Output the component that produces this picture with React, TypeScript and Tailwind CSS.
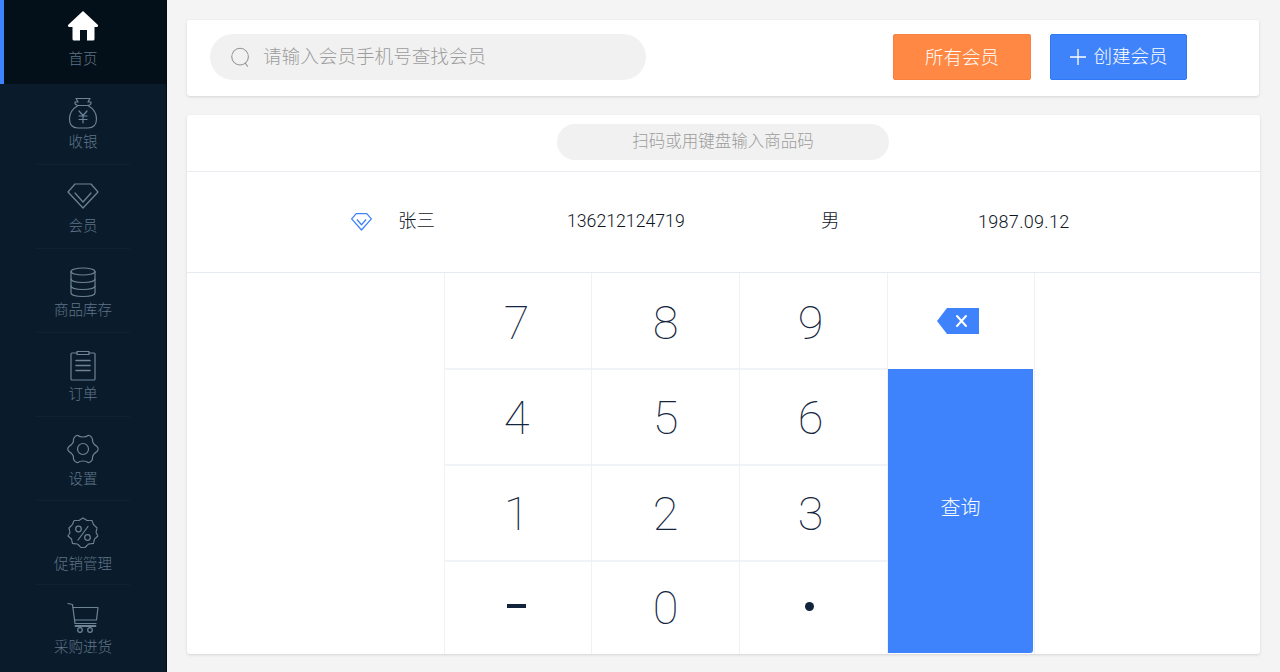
import type { ReactNode } from 'react';

const cjk = '[font-family:Roboto,"Noto_Sans_CJK_SC",sans-serif]';

function NavIcon({ children }: { children: ReactNode }) {
  return (
    <svg viewBox="0 0 32 32" className="w-8 h-8" fill="none" stroke="#6d8497" strokeWidth="1.2" strokeLinejoin="round" strokeLinecap="round">
      {children}
    </svg>
  );
}

function HomeIcon() {
  return (
    <svg viewBox="0 0 32 32" className="w-8 h-8">
      <path fill="#fff" d="M16 1 L31 15 Q31.5 17 29 17 L27.5 17 L27.5 29 Q27.5 30.5 26 30.5 L20 30.5 L20 20 L13 20 L13 30.5 L7 30.5 Q5.5 30.5 5.5 29 L5.5 17 L3 17 Q.5 17 1 15 Z" />
    </svg>
  );
}

function BagIcon() {
  return (
    <NavIcon>
      <path d="M9 1.5 L23 1.5 L21 5 L24 5 Q24.5 8 21 8.5 L11 8.5 Q7.5 8 8 5 L11 5 Z" />
      <path d="M11 8.5 C5 12 2.5 17 2.5 22 C2.5 28 6 31 11 31 L21 31 C26 31 29.5 28 29.5 22 C29.5 17 27 12 21 8.5" />
      <path d="M12 14 L16 18.5 L20 14 M16 18.5 L16 26 M12 19 L20 19 M12 22.5 L20 22.5" />
    </NavIcon>
  );
}

function DiamondIcon() {
  return (
    <NavIcon>
      <path d="M8 3 L24 3 L31 11 L16 27 L1 11 Z" />
      <path d="M8 12 L16 21 L24 12" />
    </NavIcon>
  );
}

function StockIcon() {
  return (
    <NavIcon>
      <ellipse cx="16" cy="5.5" rx="12" ry="3.5" />
      <path d="M4 5.5 L4 27 C4 29 9 30.5 16 30.5 C23 30.5 28 29 28 27 L28 5.5" />
      <path d="M4 13 C4 15 9 16.5 16 16.5 C23 16.5 28 15 28 13" />
      <path d="M4 20 C4 22 9 23.5 16 23.5 C23 23.5 28 22 28 20" />
    </NavIcon>
  );
}

function OrderIcon() {
  return (
    <NavIcon>
      <path d="M10 3 L5 3 Q4 3 4 4 L4 29 Q4 30 5 30 L27 30 Q28 30 28 29 L28 4 Q28 3 27 3 L22 3" />
      <path d="M10 1.5 L22 1.5 L22 4.5 L10 4.5 Z" />
      <path d="M9 10.5 L23 10.5 M9 15.5 L23 15.5 M9 20.5 L23 20.5" strokeWidth="1.6" />
    </NavIcon>
  );
}

function GearIcon() {
  return (
    <NavIcon>
      <path d="M11 2.5 C13 4.5 19 4.5 21 2.5 C23 2 26 5 25.5 7.5 C25.5 10 27 11.5 30 13.5 C31.5 15 31.5 17 30 18.5 C27 20.5 25.5 22 25.5 24.5 C26 27 23 30 21 29.5 C19 27.5 13 27.5 11 29.5 C9 30 6 27 6.5 24.5 C6.5 22 5 20.5 2 18.5 C.5 17 .5 15 2 13.5 C5 11.5 6.5 10 6.5 7.5 C6 5 9 2 11 2.5 Z" />
      <circle cx="16" cy="16" r="5.5" />
    </NavIcon>
  );
}

function PromoIcon() {
  return (
    <NavIcon>
      <path d="M16 1 L20 3.5 L25 3.5 L26.5 7.5 L30 11 L29 15.5 L31 19 L27.5 22 L26.5 26.5 L21.5 27 L18 30.5 L14 30.5 L10.5 27 L5.5 26.5 L4.5 22 L1 19 L3 15.5 L2 11 L5.5 7.5 L7 3.5 L12 3.5 Z" strokeDasharray="3 1" />
      <circle cx="11.5" cy="12" r="2.8" />
      <circle cx="20.5" cy="20.5" r="2.8" />
      <path d="M21 9.5 L11 23" />
    </NavIcon>
  );
}

function CartIcon() {
  return (
    <NavIcon>
      <path d="M1 1.5 L5.5 2.5 L8 21.5 L29 21.5" />
      <path d="M6 5.5 L31 5.5 L29.5 18 L7.5 18" />
      <path d="M8.5 24 L28.5 24" strokeWidth="1.8" />
      <circle cx="13" cy="28" r="2.3" />
      <circle cx="23" cy="28" r="2.3" />
    </NavIcon>
  );
}

const navItems = [
  { label: '收银', icon: <BagIcon />, box: 'h-[81px] pt-[13px]', gap: 'mt-[4px]' },
  { label: '会员', icon: <DiamondIcon />, box: 'h-[84px] pt-[16px]', gap: 'mt-[4px]' },
  { label: '商品库存', icon: <StockIcon />, box: 'h-[84px] pt-[17px]', gap: 'mt-[3px]' },
  { label: '订单', icon: <OrderIcon />, box: 'h-[84px] pt-[17px]', gap: 'mt-[3px]' },
  { label: '设置', icon: <GearIcon />, box: 'h-[84px] pt-[16px]', gap: 'mt-[5px]' },
  { label: '促销管理', icon: <PromoIcon />, box: 'h-[84px] pt-[16px]', gap: 'mt-[6px]' },
  { label: '采购进货', icon: <CartIcon />, box: 'h-[84px] pt-[17px]', gap: 'mt-[4px]' },
];

function Sidebar() {
  return (
    <aside className="w-[167px] h-full shrink-0 bg-[#0a1c2c] border-r border-[#030a10] overflow-hidden">
      <div className="h-[84px] bg-[#041019] border-l-4 border-[#3e83fb] pt-[10px] flex flex-col items-center">
        <div className="-ml-[4px] flex flex-col items-center">
          <HomeIcon />
          <span className="mt-[8px] text-[14.5px] leading-5 text-[#5f7488] font-light">首页</span>
        </div>
      </div>
      {navItems.map((item, i) => (
        <div key={item.label} className={`${item.box} relative flex flex-col items-center`}>
          {item.icon}
          <span className={`${item.gap} text-[14.5px] leading-5 text-[#5f7488] font-light`}>{item.label}</span>
          {i < navItems.length - 1 && <div className="absolute bottom-0 left-[36px] w-[94px] h-px bg-[#0f2233]" />}
        </div>
      ))}
    </aside>
  );
}

function SearchBar() {
  return (
    <div className="w-[436px] h-[46px] rounded-full bg-[#f1f1f1] flex items-center pl-[20px]">
      <svg viewBox="0 0 24 24" className="w-[21px] h-[21px]" fill="none" stroke="#8f8f8f" strokeWidth="1.2" strokeLinecap="round">
        <circle cx="11.5" cy="11" r="9.5" />
        <path d="M17.5 18.5 L20 22" />
      </svg>
      <span className="ml-[12px] pt-[1px] text-[18.6px] text-[#9c9c9c] font-light">请输入会员手机号查找会员</span>
    </div>
  );
}

const keys = ['7', '8', '9', '4', '5', '6', '1', '2', '3', '-', '0', '.'];
const keyRowPad = ['pt-[3px]', 'pt-[1px]', 'pt-[1px]', 'pb-[1px]'];

function Keypad() {
  return (
    <div className="ml-[257px] flex flex-1 min-h-0">
      <div className="w-[444px] border-l border-[#eef1f6] grid grid-cols-[147px_148px_148px] grid-rows-[97px_96px_96px_92px]">
        {keys.map((key, i) => (
          <div
            key={key}
            className={`${i < 9 ? 'border-b-2 border-b-[#f0f3f8]' : ''} border-r border-r-[#eef1f6] ${i % 3 === 2 ? 'pr-[6px]' : i % 3 === 0 ? 'pr-[3px]' : ''} ${keyRowPad[Math.floor(i / 3)]} flex items-center justify-center text-[47px] leading-none text-[#14263f] font-thin`}
          >
            {key === '-' ? (
              <div className="w-[19px] h-[4px] bg-[#12243c] mb-[4px]" />
            ) : key === '.' ? (
              <div className="w-[9px] h-[9px] rounded-full bg-[#12243c] -ml-[2px] mb-[2px]" />
            ) : (
              key
            )}
          </div>
        ))}
      </div>
      <div className="w-[147px] flex flex-col border-r border-[#eef1f6]">
        <div className="h-[96px] flex items-center justify-center">
          <svg viewBox="0 0 42 28" className="w-[42px] h-[28px] -ml-[7px]">
            <path fill="#3e83fb" d="M10 1 L42 1 L42 27 L10 27 L0 14 Z" />
            <path stroke="#fff" strokeWidth="2" strokeLinecap="round" d="M20 9 L29 19 M29 9 L20 19" />
          </svg>
        </div>
        <div className="flex-1 mb-px mr-px bg-[#3e83fb] rounded-br-[3px] flex items-center justify-center pb-[6px] text-[20px] font-light text-white">
          查询
        </div>
      </div>
    </div>
  );
}

export default function App() {
  return (
    <div className={`flex w-[1280px] h-[672px] overflow-hidden bg-[#f4f4f4] ${cjk}`}>
      <Sidebar />
      <main className="flex-1 pl-[20px] pr-[20px] pt-[20px]">
        <div className="h-[76px] mr-px rounded-[3px] bg-white shadow-[0_1px_3px_rgba(0,0,0,0.13)] flex items-start pt-[14px] pl-[23px]">
          <SearchBar />
          <button className="ml-[247px] w-[138px] h-[46px] pt-[3px] bg-[#ff8844] border border-[#f98040] rounded-[2px] text-[18.5px] text-white font-light">
            所有会员
          </button>
          <button className="ml-[19px] w-[137px] h-[46px] pt-[2px] pl-px bg-[#3f83fb] border border-[#2f78f5] rounded-[2px] text-[18.5px] text-white font-light flex items-center justify-center gap-[7px]">
            <svg viewBox="0 0 16 16" className="w-4 h-4 -mt-[2px]" stroke="#fff" strokeWidth="1.3"><path d="M8 0 L8 16 M0 8 L16 8" /></svg>
            创建会员
          </button>
        </div>
        <div className="mt-[19px] h-[539px] rounded-[3px] bg-white shadow-[0_1px_3px_rgba(0,0,0,0.13)] flex flex-col">
          <div className="h-[57px] shrink-0 border-b border-[#e8ebf0] flex items-start pt-[9px] pl-[370px]">
            <div className="w-[332px] h-[36px] rounded-full bg-[#f1f1f1] flex items-center justify-center text-[16.5px] text-[#9c9c9c] font-light">
              扫码或用键盘输入商品码
            </div>
          </div>
          <div className="h-[101px] shrink-0 border-b border-[#e6eaf1] flex items-center text-[#10161f] text-[18.5px] font-light">
            <svg viewBox="0 0 32 32" className="ml-[164px] w-[21px] h-[21px] -mt-[2px]" fill="none" stroke="#3e83fb" strokeWidth="2" strokeLinejoin="round">
              <path d="M8 4 L24 4 L31 12 L16 29 L1 12 Z" />
              <path d="M9 13 L16 21 L23 13" />
            </svg>
            <span className="ml-[26px] w-[169px]">张三</span>
            <span className="w-[254px] -mt-[2px] text-[17.7px]">136212124719</span>
            <span className="w-[157px]">男</span>
            <span className="-mt-[2px] text-[18px] tracking-[0.3px]">1987.09.12</span>
          </div>
          <Keypad />
        </div>
      </main>
    </div>
  );
}
